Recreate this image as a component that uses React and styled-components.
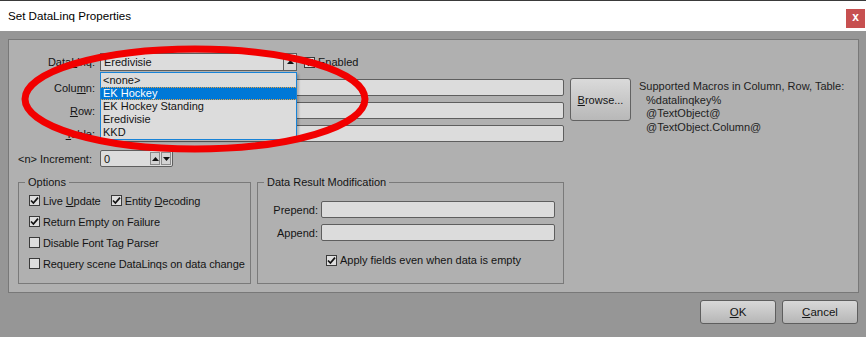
import React from 'react';
import styled, { createGlobalStyle } from 'styled-components';

const GlobalStyle = createGlobalStyle`
    body {
        margin: 0;
        background: #969696;
        font-family: "Liberation Sans", Arial, sans-serif;
        font-size: 11px;
        color: #141414;
    }
`;

const items = ['<none>', 'EK Hockey', 'EK Hockey Standing', 'Eredivisie', 'KKD'];

const Check = ({ checked, children, indent }) => (
    <CheckRow $indent={indent}>
        <Box>
            {checked && (
                <svg width="9" height="9" viewBox="0 0 9 9">
                    <path d="M1 4.5 L3.4 7 L8 1.6" fill="none" stroke="#111" strokeWidth="1.7" />
                </svg>
            )}
        </Box>
        <span>{children}</span>
    </CheckRow>
);

const App = () => {
    return (
        <Dialog>
            <GlobalStyle />
            <TitleBar>
                <Title>Set DataLinq Properties</Title>
                <CloseButton>x</CloseButton>
            </TitleBar>

            <Body>
                <Panel>
                    <FieldRow>
                        <FieldLabel>Data<u>L</u>inq:</FieldLabel>
                        <ComboWrap>
                            <Combo>
                                <ComboText>Eredivisie</ComboText>
                                <ComboArrow>
                                    <svg width="7" height="4" viewBox="0 0 7 4"><path d="M0 4 L3.5 0 L7 4Z" fill="#111" /></svg>
                                </ComboArrow>
                            </Combo>
                            <DropList>
                                {items.map((it) => (
                                    <DropItem key={it} $active={it === 'EK Hockey'}>{it}</DropItem>
                                ))}
                            </DropList>
                        </ComboWrap>
                        <EnabledCheck>
                            <Check checked><u>E</u>nabled</Check>
                        </EnabledCheck>
                    </FieldRow>

                    <FieldsArea>
                        <Fields>
                            <FieldRow>
                                <FieldLabel>Colu<u>m</u>n:</FieldLabel>
                                <TextInput $width={464} />
                            </FieldRow>
                            <FieldRow>
                                <FieldLabel><u>R</u>ow:</FieldLabel>
                                <TextInput $width={464} />
                            </FieldRow>
                            <FieldRow>
                                <FieldLabel><u>T</u>able:</FieldLabel>
                                <TextInput $width={464} />
                            </FieldRow>
                        </Fields>
                        <BrowseButton><u>B</u>rowse...</BrowseButton>
                        <Macros>
                            <div>Supported Macros in Column, Row, Table:</div>
                            <MacroLine>%datalinqkey%</MacroLine>
                            <MacroLine>@TextObject@</MacroLine>
                            <MacroLine>@TextObject.Column@</MacroLine>
                        </Macros>
                    </FieldsArea>

                    <IncrementRow>
                        <IncLabel>&lt;n&gt; Increment:</IncLabel>
                        <Spin>
                            <ComboText>0</ComboText>
                            <SpinButtons>
                                <SpinBtn>
                                    <svg width="7" height="4" viewBox="0 0 7 4"><path d="M0 4 L3.5 0 L7 4Z" fill="#111" /></svg>
                                </SpinBtn>
                                <SpinBtn>
                                    <svg width="7" height="4" viewBox="0 0 7 4"><path d="M0 0 L3.5 4 L7 0Z" fill="#111" /></svg>
                                </SpinBtn>
                            </SpinButtons>
                        </Spin>
                    </IncrementRow>

                    <Groups>
                        <Group $width={233}>
                            <legend>Options</legend>
                            <OptionList>
                                <Pair>
                                    <Check checked>Live <u>U</u>pdate</Check>
                                    <Check checked>Entity <u>D</u>ecoding</Check>
                                </Pair>
                                <Check checked>Return Empty on Failure</Check>
                                <Check>Disable Font Tag Parser</Check>
                                <Check>Requery scene DataLinqs on data change</Check>
                            </OptionList>
                        </Group>
                        <Group $width={307}>
                            <legend>Data Result Modification</legend>
                            <ModFields>
                                <ModRow>
                                    <ModLabel>Prepend:</ModLabel>
                                    <TextInput $width={234} />
                                </ModRow>
                                <ModRow>
                                    <ModLabel>Append:</ModLabel>
                                    <TextInput $width={234} />
                                </ModRow>
                                <Check checked indent={68}>Apply fields even when data is empty</Check>
                            </ModFields>
                        </Group>
                    </Groups>
                </Panel>
            </Body>

            <Footer>
                <Button><u>O</u>K</Button>
                <Button><u>C</u>ancel</Button>
            </Footer>

            <Annotation width="866" height="337" viewBox="0 0 866 337">
                <ellipse cx="195" cy="99" rx="170" ry="50" fill="none" stroke="#f20000" strokeWidth="7" />
            </Annotation>
        </Dialog>
    );
};

export default App;

const Dialog = styled.div`
    position: relative;
    width: 866px;
    height: 337px;
    background: #969696;
    overflow: hidden;
`;

const TitleBar = styled.div`
    height: 30px;
    border-top: 1px solid #3a3a3a;
    background: #fff;
    display: flex;
    align-items: center;
    justify-content: space-between;
    padding: 0 1px 0 8px;
`;

const Title = styled.div`
    font-size: 11.6px;
    color: #000;
    margin-top: -1px;
`;

const CloseButton = styled.div`
    width: 19px;
    height: 19px;
    margin-top: 4px;
    background: #c75050;
    color: #fff;
    font-weight: bold;
    font-size: 12px;
    display: flex;
    align-items: center;
    justify-content: center;
    line-height: 1;
    padding-bottom: 2px;
    box-sizing: border-box;
`;

const Body = styled.div`
    padding: 8px 7px 0 8px;
`;

const Panel = styled.div`
    height: 254px;
    box-sizing: border-box;
    border: 1px solid #787878;
    background: #b0b0b0;
    padding-top: 13px;
`;

const FieldRow = styled.div`
    display: flex;
    align-items: center;
`;

const FieldLabel = styled.div`
    width: 86px;
    margin-right: 5px;
    text-align: right;
    white-space: nowrap;
`;

const ComboWrap = styled.div`
    position: relative;
`;

const Combo = styled.div`
    width: 197px;
    height: 18px;
    box-sizing: border-box;
    border: 1px solid #5e5e5e;
    background: #dcdcdc;
    display: flex;
    align-items: center;
`;

const ComboText = styled.div`
    flex: 1;
    padding-left: 3px;
`;

const ComboArrow = styled.div`
    width: 12px;
    height: 100%;
    border-left: 1px solid #5e5e5e;
    display: flex;
    align-items: center;
    justify-content: center;
    background: #d6d6d6;
`;

const DropList = styled.div`
    position: absolute;
    top: calc(100% + 1px);
    left: 0;
    width: 197px;
    box-sizing: border-box;
    border: 1px solid #1883d7;
    padding-top: 1px;
    background: #dcdcdc;
    z-index: 2;
    box-shadow: 2px 2px 2px rgba(0, 0, 0, 0.2);
`;

const DropItem = styled.div`
    height: 13px;
    line-height: 13px;
    padding-left: 2px;
    box-sizing: border-box;
    white-space: nowrap;
    background: ${(p) => (p.$active ? '#0078d7' : 'transparent')};
    color: ${(p) => (p.$active ? '#fff' : '#141414')};
    border-top: 1px dotted ${(p) => (p.$active ? '#e8a040' : 'transparent')};
    border-bottom: 1px dotted ${(p) => (p.$active ? '#e8a040' : 'transparent')};
    display: flex;
    align-items: center;
`;

const EnabledCheck = styled.div`
    margin-left: 7px;
`;

const CheckRow = styled.div`
    display: flex;
    align-items: center;
    gap: 3px;
    white-space: nowrap;
    margin-left: ${(p) => p.$indent || 0}px;
`;

const Box = styled.span`
    width: 11px;
    height: 11px;
    box-sizing: border-box;
    border: 1px solid #3a3a3a;
    background: #dedede;
    display: inline-flex;
    align-items: center;
    justify-content: center;
`;

const FieldsArea = styled.div`
    display: flex;
    align-items: flex-start;
    margin-top: 8px;
`;

const Fields = styled.div`
    display: flex;
    flex-direction: column;
    gap: 6px;
`;

const TextInput = styled.div`
    width: ${(p) => p.$width}px;
    height: 17px;
    box-sizing: border-box;
    border: 1px solid #5e5e5e;
    border-radius: 2px;
    background: #dcdcdc;
`;

const BrowseButton = styled.div`
    width: 61px;
    height: 43px;
    margin: -1px 0 0 6px;
    box-sizing: border-box;
    border: 1px solid #626262;
    border-radius: 3px;
    background: linear-gradient(#dadada, #b8b8b8);
    display: flex;
    align-items: center;
    justify-content: center;
`;

const Macros = styled.div`
    margin: 1px 0 0 8px;
    line-height: 13.5px;
    color: #1e1e1e;
`;

const MacroLine = styled.div`
    padding-left: 7px;
`;

const IncrementRow = styled.div`
    display: flex;
    align-items: center;
    margin-top: 8px;
    padding-left: 9px;
`;

const IncLabel = styled.div`
    width: 82px;
    white-space: nowrap;
`;

const Spin = styled(Combo)`
    width: 73px;
    height: 17px;
    border-radius: 2px;
`;

const SpinButtons = styled.div`
    display: flex;
    gap: 1px;
    margin-right: 1px;
`;

const SpinBtn = styled.div`
    width: 10px;
    height: 13px;
    box-sizing: border-box;
    border: 1px solid #8a8a8a;
    background: #d2d2d2;
    display: flex;
    align-items: center;
    justify-content: center;
`;

const Groups = styled.div`
    display: flex;
    gap: 6px;
    margin-top: 9px;
    padding-left: 9px;
`;

const Group = styled.fieldset`
    margin: 0;
    padding: 0;
    min-width: 0;
    width: ${(p) => p.$width}px;
    height: 108px;
    box-sizing: border-box;
    border: 1px solid #7a7a7a;

    legend {
        margin-left: 6px;
        padding: 0 3px;
        line-height: 13px;
        font-size: 11px;
    }
`;

const OptionList = styled.div`
    display: flex;
    flex-direction: column;
    padding: 1px 0 0 10px;
    letter-spacing: -0.1px;

    & > * {
        height: 21px;
    }
`;

const Pair = styled.div`
    display: flex;
    align-items: center;
    gap: 10px;
`;

const ModFields = styled.div`
    display: flex;
    flex-direction: column;
    gap: 6px;
    padding-top: 12px;

    & > :last-child {
        margin-top: 7px;
    }
`;

const ModRow = styled.div`
    display: flex;
    align-items: center;
`;

const ModLabel = styled.div`
    width: 60px;
    margin-right: 3px;
    text-align: right;
`;

const Footer = styled.div`
    display: flex;
    justify-content: flex-end;
    gap: 6px;
    padding: 7px 8px 0 0;
`;

const Button = styled.div`
    width: 76px;
    height: 24px;
    box-sizing: border-box;
    border: 1px solid #5e5e5e;
    border-radius: 3px;
    background: linear-gradient(#d8d8d8, #b6b6b6);
    display: flex;
    align-items: center;
    justify-content: center;
    font-size: 11.5px;
`;

const Annotation = styled.svg`
    position: absolute;
    left: 0;
    top: 0;
    pointer-events: none;
    z-index: 5;
`;
